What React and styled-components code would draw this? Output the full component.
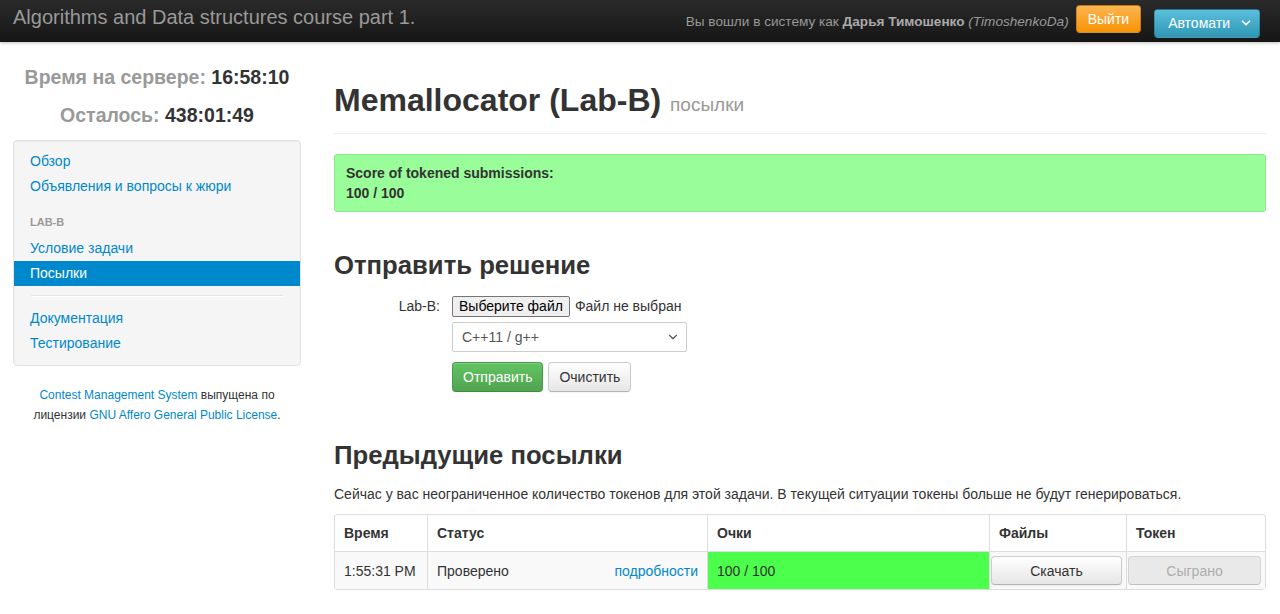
import styled, { createGlobalStyle } from "styled-components";
import { ChevronDown } from "lucide-react";

const GlobalStyle = createGlobalStyle`
  body {
    margin: 0;
    background: #fff;
    color: #333;
    font-family: "Liberation Sans", Arial, sans-serif;
    font-size: 14px;
    line-height: 20px;
  }
  a {
    color: #0088cc;
    text-decoration: none;
  }
`;

export default function App() {
  return (
    <>
      <GlobalStyle />
      <Navbar>
        <Brand>Algorithms and Data structures course part 1.</Brand>
        <NavRight>
          <LoggedIn>
            Вы вошли в систему как <b>Дарья Тимошенко</b> <i>(TimoshenkoDa)</i>
          </LoggedIn>
          <NavButton $variant="warning">Выйти</NavButton>
          <NavButton $variant="info" $dropdown>
            Автомати
            <ChevronDown size={14} strokeWidth={3} />
          </NavButton>
        </NavRight>
      </Navbar>

      <Page>
        <Sidebar>
          <Clock>
            <ClockLine>
              <span>Время на сервере: </span>16:58:10
            </ClockLine>
            <ClockLine>
              <span>Осталось: </span>438:01:49
            </ClockLine>
          </Clock>
          <Well>
            <NavItem>Обзор</NavItem>
            <NavItem>Объявления и вопросы к жюри</NavItem>
            <NavHeader>Lab-B</NavHeader>
            <NavItem>Условие задачи</NavItem>
            <NavItem $active>Посылки</NavItem>
            <Divider />
            <NavItem>Документация</NavItem>
            <NavItem>Тестирование</NavItem>
          </Well>
          <Credits>
            <a href="#">Contest Management System</a> выпущена по
            <br />
            лицензии <a href="#">GNU Affero General Public License</a>.
          </Credits>
        </Sidebar>

        <Main>
          <PageHeader>
            <h1>
              Memallocator (Lab-B) <small>посылки</small>
            </h1>
          </PageHeader>

          <Alert>
            Score of tokened submissions:
            <br />
            100 / 100
          </Alert>

          <SectionTitle $top={33}>Отправить решение</SectionTitle>
          <Form>
            <FormLabel>Lab-B:</FormLabel>
            <FileRow>
              <FileButton>Выберите файл</FileButton>
              <span>Файл не выбран</span>
            </FileRow>
            <span />
            <Select>
              C++11 / g++
              <ChevronDown size={14} strokeWidth={2} color="#555" />
            </Select>
            <span />
            <Actions>
              <Button $variant="success">Отправить</Button>
              <Button>Очистить</Button>
            </Actions>
          </Form>

          <SectionTitle $top={43}>Предыдущие посылки</SectionTitle>
          <Note>
            Сейчас у вас неограниченное количество токенов для этой задачи. В
            текущей ситуации токены больше не будут генерироваться.
          </Note>

          <Table>
            <colgroup>
              <col style={{ width: 93 }} />
              <col style={{ width: 280 }} />
              <col style={{ width: 282 }} />
              <col style={{ width: 137 }} />
              <col style={{ width: 139 }} />
            </colgroup>
            <thead>
              <tr>
                <Th>Время</Th>
                <Th>Статус</Th>
                <Th>Очки</Th>
                <Th>Файлы</Th>
                <Th>Токен</Th>
              </tr>
            </thead>
            <tbody>
              <tr>
                <Td>1:55:31 PM</Td>
                <Td>
                  Проверено
                  <Details href="#">подробности</Details>
                </Td>
                <Td $score>100 / 100</Td>
                <Td $button>
                  <Button $block>Скачать</Button>
                </Td>
                <Td $button>
                  <Button $block disabled>
                    Сыграно
                  </Button>
                </Td>
              </tr>
            </tbody>
          </Table>
        </Main>
      </Page>
    </>
  );
}

const Navbar = styled.div`
  height: 42px;
  padding: 0 20px 0 13px;
  display: flex;
  align-items: center;
  justify-content: space-between;
  background: linear-gradient(#2a2a2a, #161616);
  box-shadow: 0 1px 3px rgba(0, 0, 0, 0.25);
`;

const Brand = styled.div`
  align-self: flex-start;
  padding-top: 6px;
  font-size: 20px;
  line-height: 22px;
  color: #999;
`;

const NavRight = styled.div`
  display: flex;
  align-items: center;
`;

const LoggedIn = styled.div`
  font-size: 13.6px;
  color: #999;
  margin-right: 7px;
  margin-top: 1px;

  b {
    color: #aaa;
  }
`;

const NavButton = styled.div`
  display: flex;
  align-items: center;
  gap: 9px;
  height: ${(p) => (p.$dropdown ? 29 : 28)}px;
  box-sizing: border-box;
  padding: 0 ${(p) => (p.$dropdown ? "6px 0 13px" : "11px")};
  margin-left: ${(p) => (p.$dropdown ? 13 : 0)}px;
  margin-top: ${(p) => (p.$dropdown ? 4 : -4)}px;
  border-radius: 4px;
  color: #fff;
  font-size: 14px;
  background: ${(p) =>
    p.$variant === "warning"
      ? "linear-gradient(#fbb450, #f89406)"
      : "linear-gradient(#5bc0de, #2f96b4)"};
  border: 1px solid rgba(0, 0, 0, 0.2);
`;

const Page = styled.div`
  display: grid;
  grid-template-columns: 288px 1fr;
  gap: 33px;
  padding: 0 15px 0 13px;
`;

const Sidebar = styled.div`
  padding-top: 21px;
`;

const Clock = styled.div`
  display: flex;
  flex-direction: column;
  gap: 10px;
  margin-bottom: 11px;
`;

const ClockLine = styled.div`
  text-align: center;
  font-size: 19.5px;
  line-height: 28px;
  font-weight: bold;
  color: #333;

  span {
    color: #999;
  }
`;

const Well = styled.div`
  background: #f5f5f5;
  border: 1px solid #e3e3e3;
  border-radius: 4px;
  box-shadow: inset 0 1px 1px rgba(0, 0, 0, 0.05);
  padding: 8px 0 9px;
`;

const NavItem = styled.a`
  display: block;
  padding: 3px 16px;
  line-height: 19px;
  color: ${(p) => (p.$active ? "#fff" : "#0088cc")};
  background: ${(p) => (p.$active ? "#0088cc" : "transparent")};
`;

const NavHeader = styled.div`
  margin-top: 10px;
  margin-bottom: 1px;
  padding: 3px 16px;
  font-size: 11px;
  font-weight: bold;
  line-height: 20px;
  color: #999;
  text-transform: uppercase;
  text-shadow: 0 1px 0 rgba(255, 255, 255, 0.5);
`;

const Divider = styled.div`
  height: 1px;
  margin: 9px 17px;
  background: #e5e5e5;
  border-bottom: 1px solid #fff;
`;

const Credits = styled.p`
  margin: 19px 0 0;
  text-align: center;
  font-size: 12px;
  line-height: 20px;
  color: #333;
`;

const Main = styled.div`
  padding-top: 38px;
`;

const PageHeader = styled.div`
  padding-bottom: 8px;
  border-bottom: 1px solid #eee;
  margin-bottom: 20px;

  h1 {
    margin: 0;
    font-size: 32px;
    line-height: 40px;
    font-weight: bold;
    color: #333;
  }

  small {
    font-size: 19px;
    font-weight: normal;
    color: #999;
  }
`;

const Alert = styled.div`
  padding: 8px 11px;
  background: #99fd99;
  border: 1px solid #8ee88e;
  border-radius: 3px;
  font-weight: bold;
  color: #333;
`;

const SectionTitle = styled.h2`
  margin: ${(p) => p.$top}px 0 0;
  font-size: 25.7px;
  line-height: 40px;
  font-weight: bold;
  color: #333;
`;

const Form = styled.div`
  display: grid;
  grid-template-columns: 106px auto;
  column-gap: 12px;
  row-gap: 5px;
  justify-content: start;
  margin-top: 10px;
`;

const FormLabel = styled.label`
  text-align: right;
  color: #333;
  line-height: 22px;
`;

const FileRow = styled.div`
  display: flex;
  align-items: center;
  gap: 5px;
  height: 22px;
`;

const FileButton = styled.div`
  height: 21px;
  box-sizing: border-box;
  padding: 0 6px;
  line-height: 19px;
  background: #efefef;
  border: 1px solid #767676;
  border-radius: 2px;
  color: #000;
`;

const Select = styled.div`
  width: 235px;
  height: 30px;
  box-sizing: border-box;
  display: flex;
  align-items: center;
  justify-content: space-between;
  padding: 0 6px 0 9px;
  border: 1px solid #ccc;
  border-radius: 2px;
  color: #555;
  background: #fff;
`;

const Actions = styled.div`
  display: flex;
  gap: 5px;
  margin-top: 5px;
`;

const Button = styled.button`
  font-family: inherit;
  font-size: 14px;
  line-height: 20px;
  height: ${(p) => (p.$block ? 29 : 30)}px;
  width: ${(p) => (p.$block ? "100%" : "auto")};
  padding: 0 10px;
  border-radius: 4px;
  border: 1px solid ${(p) => (p.$variant === "success" ? "#4a9a4a" : "#ccc")};
  border-bottom-color: ${(p) => (p.$variant === "success" ? "#3e8e3e" : "#b3b3b3")};
  color: ${(p) => (p.$variant === "success" ? "#fff" : "#333")};
  background: ${(p) =>
    p.$variant === "success"
      ? "linear-gradient(#62c462, #51a351)"
      : "linear-gradient(#ffffff, #e6e6e6)"};
  box-shadow: inset 0 1px 0 rgba(255, 255, 255, 0.2), 0 1px 2px rgba(0, 0, 0, 0.05);

  &:disabled {
    background: #e6e6e6;
    color: #999;
    opacity: 0.8;
    box-shadow: none;
  }
`;

const Note = styled.p`
  margin: 9px 0 10px;
  color: #333;
`;

const Table = styled.table`
  width: 100%;
  table-layout: fixed;
  border-collapse: separate;
  border-spacing: 0;
  border: 1px solid #ddd;
  border-left: 0;
  border-radius: 4px;
`;

const Th = styled.th`
  height: 36px;
  padding: 0 9px;
  text-align: left;
  font-weight: bold;
  border-left: 1px solid #ddd;
  vertical-align: middle;
`;

const Td = styled.td`
  height: 37px;
  padding: ${(p) => (p.$button ? "0 4px 0 1px" : "0 9px")};
  border-left: 1px solid #ddd;
  border-top: 1px solid #ddd;
  background: ${(p) => (p.$score ? "#4cff4c" : "#f9f9f9")};
  vertical-align: middle;
`;

const Details = styled.a`
  float: right;
`;
